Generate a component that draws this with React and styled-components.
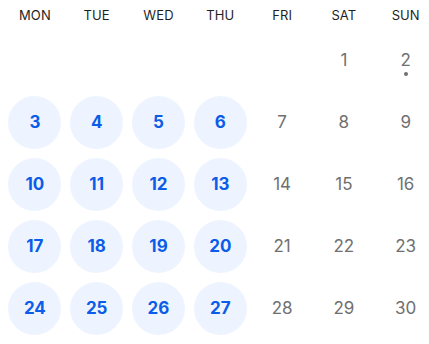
import React from "react";
import styled, { createGlobalStyle } from "styled-components";

const GlobalStyle = createGlobalStyle`
  body {
    margin: 0;
    background: #ffffff;
    font-family: "Inter", "Noto Sans", sans-serif;
    overflow: hidden;
  }
`;

const days = ["MON", "TUE", "WED", "THU", "FRI", "SAT", "SUN"];

// leading blanks before the 1st (month starts on saturday)
const offset = 5;
const total = 30;
const highlighted = [3, 4, 5, 6, 10, 11, 12, 13, 17, 18, 19, 20, 24, 25, 26, 27];
const marked = [2];

const Calendar = () => {
  const cells = [];
  for (let i = 0; i < offset; i++) cells.push(null);
  for (let d = 1; d <= total; d++) cells.push(d);

  return (
    <Wrapper>
      <Header>
        {days.map((item) => (
          <DayName key={item}>{item}</DayName>
        ))}
      </Header>
      <Grid>
        {cells.map((item, i) => {
          if (item === null) return <Cell key={"e" + i} />;
          const active = highlighted.includes(item);
          return (
            <Cell key={item}>
              <DayButton $active={active}>
                {item}
                {marked.includes(item) && <Dot />}
              </DayButton>
            </Cell>
          );
        })}
      </Grid>
    </Wrapper>
  );
};

export default function App() {
  return (
    <>
      <GlobalStyle />
      <Calendar />
    </>
  );
}

const Wrapper = styled.section`
  width: 434px;
  padding-left: 4px;
`;

const Header = styled.div`
  display: grid;
  grid-template-columns: repeat(7, 61.8px);
  height: 30px;
  align-items: center;
`;

const DayName = styled.div`
  text-align: center;
  font-size: 13px;
  color: #1f1f1f;
  letter-spacing: 0.1px;
`;

const Grid = styled.div`
  display: grid;
  grid-template-columns: repeat(7, 61.8px);
  grid-auto-rows: 62px;
  margin-top: -1px;
`;

const Cell = styled.div`
  display: flex;
  align-items: center;
  justify-content: center;
`;

const DayButton = styled.div`
  position: relative;
  width: 53px;
  height: 53px;
  border-radius: 50%;
  display: flex;
  align-items: center;
  justify-content: center;
  font-size: 17px;
  font-weight: ${(p) => (p.$active ? 700 : 400)};
  color: ${(p) => (p.$active ? "#0b5ce8" : "#707070")};
  background: ${(p) => (p.$active ? "#eef4ff" : "transparent")};
`;

const Dot = styled.span`
  position: absolute;
  left: 50%;
  top: 38px;
  width: 4px;
  height: 4px;
  margin-left: -2px;
  border-radius: 50%;
  background: #707070;
`;
